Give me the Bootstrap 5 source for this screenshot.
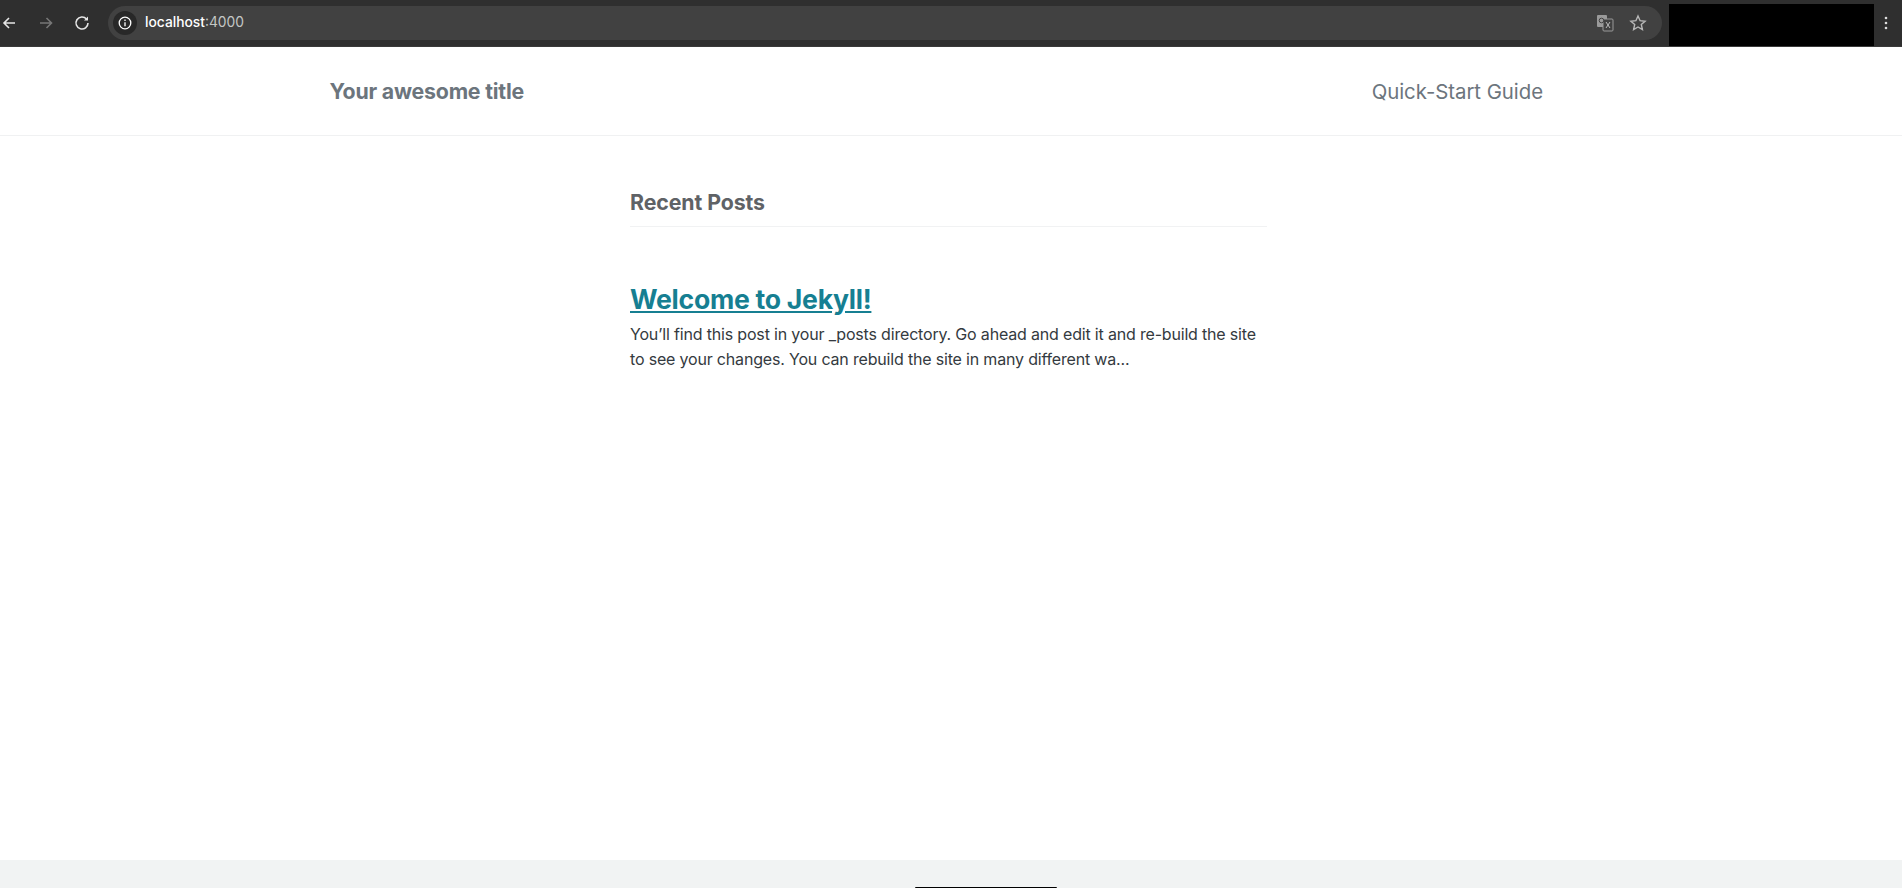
<!DOCTYPE html>
<html lang="en">
<head>
<meta charset="utf-8">
<title>Your awesome title</title>
<link href="https://cdn.jsdelivr.net/npm/bootstrap@5.3.0/dist/css/bootstrap.min.css" rel="stylesheet">
<style>
html,body{height:888px;overflow:hidden}
body{font-family:Inter,"Liberation Sans",sans-serif;background:#fff;color:#343a40}
.chrome-bar{height:47px;background:#2f2f2f;border-bottom:1px solid #3a3a3a}
.nav-ico{height:36px;flex:none}
.omni{width:1554px;height:34px;margin-left:8px;background:#414141;border-radius:17px;padding:0 15px 0 5px}
.omni-info{width:24px;height:24px;border-radius:50%;background:#282828;flex:none}
.omni-url{font-size:13.8px;color:#c4c7c5;margin-left:8px;line-height:1}
.omni-url b{font-weight:500;color:#fff}
.redact{width:205px;height:42px;background:#000;margin-left:7px;align-self:flex-end}
.site-head{height:89px;border-bottom:1px solid #f0f1f2}
.site-inner{padding:2px 359px 0 329.5px}
.site-brand{font-size:21.3px;font-weight:700;color:#6c757d;text-decoration:none;letter-spacing:-.2px}
.site-link{font-size:20.4px;color:#6c757d;text-decoration:none;letter-spacing:-.05px}
.main-col{width:637px;margin-left:630px}
.recent{font-size:21.3px;font-weight:700;color:#5f6266;margin:0;padding-top:50px;padding-bottom:8px;border-bottom:1px solid #f1f2f3;line-height:32px;letter-spacing:-.08px}
.post-title{font-size:26.6px;font-weight:700;margin:54px 0 0;line-height:36px;letter-spacing:-.27px}
.post-title a{color:#167f92}
.post-text{font-size:16px;line-height:25.6px;color:#343a40;margin:4.500px 0 0;letter-spacing:-.18px}
.foot{height:28px;background:#f1f3f3;position:absolute;left:0;right:0;top:860px}
.foot-mark{width:142px;height:1px;background:#000;margin-left:915px;margin-top:27px;border-radius:2px 2px 0 0}
</style>
</head>
<body>
<div class="chrome-bar d-flex align-items-center">
  <svg class="nav-ico" width="20" viewBox="0 0 20 36" fill="none" stroke="#e6e6e6" stroke-width="1.6"><path d="M15 18H4M9 13l-5 5 5 5"/></svg>
  <svg class="nav-ico ms-2" width="36" viewBox="0 0 36 36" fill="none" stroke="#777" stroke-width="1.6"><path d="M12 18h11M18.500 13l5 5-5 5"/></svg>
  <svg class="nav-ico" width="36" viewBox="0 0 36 36" fill="none" stroke="#e6e6e6" stroke-width="1.6"><path d="M22.500 14a6 6 0 1 0 1.500 4"/><path d="M24 11.500V15.500H20" fill="#e6e6e6" stroke="none"/></svg>
  <div class="omni d-flex align-items-center">
    <div class="omni-info d-flex align-items-center justify-content-center">
      <svg width="14" height="14" viewBox="0 0 14 14" fill="none" stroke="#fff" stroke-width="1.300"><circle cx="7" cy="7" r="5.800"/><path d="M7 6.200v4M7 3.600v1.400"/></svg>
    </div>
    <div class="omni-url"><b>localhost</b>:4000</div>
    <svg class="ms-auto" width="18" height="18" viewBox="0 0 18 18"><rect x="1" y="1" width="10" height="12" rx="1" fill="#9a9a9a"/><rect x="7" y="5" width="10" height="12" rx="1" fill="#414141" stroke="#9a9a9a"/><path d="M10 8l4 6M14 8l-4 6" stroke="#bbb" stroke-width="1"/><circle cx="5.500" cy="6.500" r="2.300" fill="none" stroke="#414141"/></svg>
    <svg style="margin-left:15px" width="18" height="18" viewBox="0 0 18 18" fill="none" stroke="#b8b8b8" stroke-width="1.400"><path d="M9 2l2.100 4.700 5 .5-3.800 3.300 1.100 5L9 13l-4.400 2.500 1.100-5-3.800-3.300 5-.5z"/></svg>
  </div>
  <div class="redact"></div>
  <svg style="margin-left:10px" width="4" height="14" viewBox="0 0 4 14" fill="#ddd"><circle cx="2" cy="2" r="1.300"/><circle cx="2" cy="7" r="1.300"/><circle cx="2" cy="12" r="1.300"/></svg>
</div>
<header class="site-head">
  <div class="site-inner h-100 d-flex justify-content-between align-items-center">
    <a class="site-brand" href="#">Your awesome title</a>
    <a class="site-link" href="#">Quick-Start Guide</a>
  </div>
</header>
<main class="main-col">
  <h2 class="recent">Recent Posts</h2>
  <h3 class="post-title"><a href="#">Welcome to Jekyll!</a></h3>
  <p class="post-text">You’ll find this post in your _posts directory. Go ahead and edit it and re-build the site to see your changes. You can rebuild the site in many different wa...</p>
</main>
<footer class="foot"><div class="foot-mark"></div></footer>
<script src="https://cdn.jsdelivr.net/npm/bootstrap@5.3.0/dist/js/bootstrap.bundle.min.js"></script>
</body>
</html>
